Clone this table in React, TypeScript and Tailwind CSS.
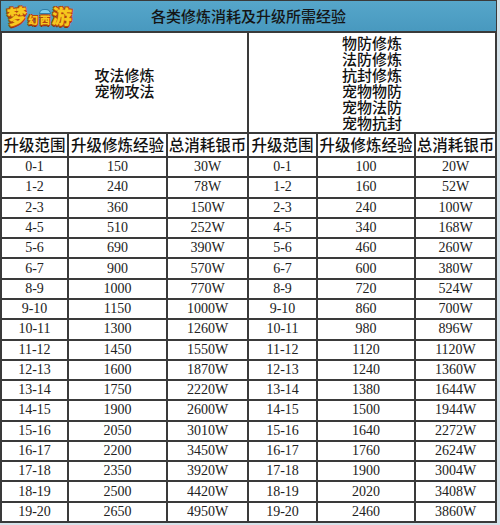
import React from 'react';

const rows: [string, string, string, string, string][] = [
  ['0-1', '150', '30W', '100', '20W'],
  ['1-2', '240', '78W', '160', '52W'],
  ['2-3', '360', '150W', '240', '100W'],
  ['4-5', '510', '252W', '340', '168W'],
  ['5-6', '690', '390W', '460', '260W'],
  ['6-7', '900', '570W', '600', '380W'],
  ['8-9', '1000', '770W', '720', '524W'],
  ['9-10', '1150', '1000W', '860', '700W'],
  ['10-11', '1300', '1260W', '980', '896W'],
  ['11-12', '1450', '1550W', '1120', '1120W'],
  ['12-13', '1600', '1870W', '1240', '1360W'],
  ['13-14', '1750', '2220W', '1380', '1644W'],
  ['14-15', '1900', '2600W', '1500', '1944W'],
  ['15-16', '2050', '3010W', '1640', '2272W'],
  ['16-17', '2200', '3450W', '1760', '2624W'],
  ['17-18', '2350', '3920W', '1900', '3004W'],
  ['18-19', '2500', '4420W', '2020', '3408W'],
  ['19-20', '2650', '4950W', '2460', '3860W'],
];

const headers = ['升级范围', '升级修炼经验', '总消耗银币'];

const cjk = "font-['Noto_Sans_CJK_SC','Noto_Sans',sans-serif]";
const num = "font-['Liberation_Serif','Noto_Sans_CJK_SC',serif]";

function Logo() {
  // stylised game logo, drawn with real text
  const glyph = 'text-[#f7c81e] font-black [text-shadow:1px_1px_0_#b4470f,-1px_-1px_0_#b4470f,1px_-1px_0_#b4470f,-1px_1px_0_#b4470f,0_2px_0_#8a2f08]';
  return (
    <div className={`flex items-center gap-[1px] ${cjk} leading-none`}>
      <span className={`${glyph} text-[20px] leading-[22px] -rotate-6`}>梦</span>
      <span className={`${glyph} text-[10px] leading-[11px] mt-[6px]`}>幻</span>
      <span className="flex flex-col items-center mt-[2px]">
        <span className="w-[12px] h-[5px] rounded-t-full bg-[#7fd0ee] border border-[#2f7fa8]" />
        <span className={`${glyph} text-[10px] leading-[11px]`}>西</span>
      </span>
      <span className={`${glyph} text-[20px] leading-[22px] rotate-3`}>游</span>
    </div>
  );
}

export default function App() {
  return (
    <div className="w-[500px] h-[525px] bg-[#d6e3ea]">
      <div className="w-[497px] h-[523px] bg-[#3a3a3a] px-[2px] pb-[2px] pt-[1px] flex flex-col gap-[2px]">
        {/* title band */}
        <div className="h-[30px] -mx-[1px] bg-gradient-to-b from-[#56a6ca] to-[#4899bf] flex items-center px-[6px] relative">
          <Logo />
          <div className={`absolute inset-0 flex items-center justify-center ${cjk} text-[15px] font-medium text-[#151515]`}>
            各类修炼消耗及升级所需经验
          </div>
        </div>

        {/* table */}
        <div className="flex-1 grid grid-cols-[65px_97px_79px_67px_96px_79px] grid-rows-[99px_22px_repeat(18,minmax(0,1fr))] gap-[2px]">
          <div className={`col-span-3 bg-white flex items-center justify-center text-center whitespace-pre-line ${cjk} text-[15px] font-medium leading-[16px] text-[#111]`}>
            {'攻法修炼\n宠物攻法'}
          </div>
          <div className={`col-span-3 bg-white flex items-center justify-center text-center whitespace-pre-line ${cjk} text-[15px] font-medium leading-[16px] text-[#111]`}>
            {'物防修炼\n法防修炼\n抗封修炼\n宠物物防\n宠物法防\n宠物抗封'}
          </div>

          {[...headers, ...headers].map((h, i) => (
            <div
              key={i}
              className={`bg-white flex items-center justify-center ${cjk} text-[15.5px] font-medium text-[#111] whitespace-nowrap leading-none`}
            >
              {h}
            </div>
          ))}

          {rows.map((r) => (
            <React.Fragment key={r[0]}>
              {[r[0], r[1], r[2], r[0], r[3], r[4]].map((c, j) => (
                <div
                  key={j}
                  className={`bg-white flex items-center justify-center ${num} text-[14px] text-[#222] leading-none`}
                >
                  {c}
                </div>
              ))}
            </React.Fragment>
          ))}
        </div>
      </div>
    </div>
  );
}
